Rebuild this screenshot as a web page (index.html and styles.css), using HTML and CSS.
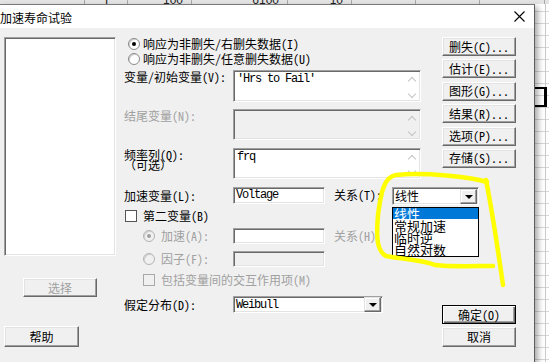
FILE: index.html
```html
<!DOCTYPE html>
<html lang="zh-CN">
<head>
    <meta charset="UTF-8">
    <title>加速寿命试验</title>
    <link rel="stylesheet" href="styles.css">
</head>
<body>
    <div class="sheet-head">
        <span></span>
        <span>F</span>
        <span>100</span>
        <span>6100</span>
        <span>10</span>
        <span></span>
        <span></span>
        <span></span>
    </div>

    <div class="desk">
        <div class="dialog">
            <div class="titlebar">
                <span class="title">加速寿命试验</span>
                <svg class="close" width="11" height="11" viewBox="0 0 11 11"><path d="M0.5 0.5L10.5 10.5M10.5 0.5L0.5 10.5" stroke="#000" stroke-width="1.1" fill="none"/></svg>
            </div>

            <div class="dlg-body">
                <div class="left-col">
                    <div class="listbox sunken"></div>
                    <div class="btn select disabled">选择</div>
                    <div class="btn help">帮助</div>
                </div>

                <div class="main">
                    <div class="top">
                        <div class="top-form">
                            <div class="opt"><span class="radio on"></span>响应为非删失/右删失数据(I)</div>
                            <div class="opt"><span class="radio"></span>响应为非删失/任意删失数据(U)</div>

                            <div class="field-row r-var">
                                <div class="label">变量/初始变量(V):</div>
                                <div class="memo sunken">
                                    <div class="memo-text">'Hrs to Fail'</div>
                                    <div class="scroll"><i class="up"></i><i class="down"></i></div>
                                </div>
                            </div>
                            <div class="field-row r-end">
                                <div class="label disabled">结尾变量(N):</div>
                                <div class="memo sunken off">
                                    <div class="memo-text"></div>
                                    <div class="scroll"><i class="up"></i><i class="down"></i></div>
                                </div>
                            </div>
                            <div class="field-row r-frq">
                                <div class="label two">频率列(Q):<br>（可选）</div>
                                <div class="memo sunken">
                                    <div class="memo-text">frq</div>
                                    <div class="scroll"><i class="up"></i><i class="down"></i></div>
                                </div>
                            </div>
                        </div>

                        <div class="side-btns">
                            <div class="btn">删失(C)...</div>
                            <div class="btn">估计(E)...</div>
                            <div class="btn">图形(G)...</div>
                            <div class="btn">结果(R)...</div>
                            <div class="btn">选项(P)...</div>
                            <div class="btn">存储(S)...</div>
                        </div>
                    </div>

                    <div class="field-row r-volt">
                        <div class="label">加速变量(L):</div>
                        <div class="edit sunken">Voltage</div>
                        <div class="rel">关系(T):</div>
                        <div class="combo sunken small">
                            <span class="combo-text">线性</span>
                            <span class="drop"></span>
                        </div>
                    </div>

                    <div class="check-row r-second">
                        <span class="check"></span>第二变量(B)
                    </div>

                    <div class="field-row sub r-acc">
                        <div class="label sub-label disabled"><span class="radio on off"></span>加速(A):</div>
                        <div class="edit sunken"></div>
                        <div class="rel disabled">关系(H)</div>
                    </div>

                    <div class="field-row sub r-fac">
                        <div class="label sub-label disabled"><span class="radio off"></span>因子(F):</div>
                        <div class="edit sunken off"></div>
                    </div>

                    <div class="check-row sub-check disabled">
                        <span class="check off"></span>包括变量间的交互作用项(M)
                    </div>

                    <div class="bottom">
                        <div class="field-row r-dist">
                            <div class="label">假定分布(D):</div>
                            <div class="combo sunken wide">
                                <span class="combo-text mono">Weibull</span>
                                <span class="drop"></span>
                            </div>
                        </div>
                        <div class="ok-btns">
                            <div class="btn default">确定(O)</div>
                            <div class="btn cancel">取消</div>
                        </div>
                    </div>
                </div>

                <ul class="popup">
                    <li class="hot">线性</li>
                    <li>常规加速</li>
                    <li>临时逆</li>
                    <li>自然对数</li>
                </ul>
            </div>
        </div>

        <div class="sheet-side">
            <div class="cell-mark"></div>
        </div>
    </div>

    <svg class="marker" width="549" height="362" viewBox="0 0 549 362">
        <path d="M487 182 C470 177, 425 172, 396 175 C384 177, 381 192, 378 215 C376 238, 377 251, 386 256 C400 259, 420 259, 435 265 C450 267, 475 266, 493 266" />
        <path d="M486 180 C492 210, 498 250, 503 285" />
    </svg>
</body>
</html>
```

FILE: styles.css
```css
*{
    box-sizing: border-box;
}
html,body{
    margin: 0;
    padding: 0;
}
body{
    width: 549px;
    height: 362px;
    overflow: hidden;
    position: relative;
    font-family: "Noto Sans Mono CJK SC", "Noto Sans CJK SC", sans-serif;
    font-size: 12px;
    color: #000;
    background-color: #fff;
    background-image:
        linear-gradient(to right, transparent 545px, #c8c8c8 545px, #c8c8c8 546px, transparent 546px),
        repeating-linear-gradient(to bottom, transparent 0, transparent 11px, #d6d6d6 11px, #d6d6d6 12px);
}

/* spreadsheet strip behind the dialog */
.sheet-head{
    height: 4px;
    display: flex;
    background: #e4e4e4;
    overflow: hidden;
    font-family: "Liberation Sans", sans-serif;
    font-size: 12px;
    line-height: 0;
}
.sheet-head span{
    height: 4px;
    border-right: 1px solid #a8a8a8;
    text-align: right;
    padding-right: 8px;
    color: #222;
}
.sheet-head span:nth-child(1){ width: 85px; }
.sheet-head span:nth-child(2){ width: 43px; text-align: left; padding-left: 20px; }
.sheet-head span:nth-child(3){ width: 64px; }
.sheet-head span:nth-child(4){ width: 96px; }
.sheet-head span:nth-child(5){ width: 64px; }
.sheet-head span:nth-child(6){ width: 64px; }
.sheet-head span:nth-child(7){ width: 64px; }
.sheet-head span:nth-child(8){ width: 65px; }

.desk{
    display: flex;
    height: 358px;
}
.sheet-side{
    flex: 1;
}
.cell-mark{
    margin-top: 83px;
    width: 12px;
    height: 20px;
    border-top: 2px solid #000;
    border-right: 3px solid #000;
    border-bottom: 2px solid #000;
}

/* dialog window */
.dialog{
    width: 535px;
    height: 358px;
    display: flex;
    flex-direction: column;
    background: #f0f0f0;
    border-top: 1px solid #7a7a7a;
    border-right: 1px solid #5e5e5e;
    box-shadow: 3px 3px 6px rgba(0,0,0,0.35);
    position: relative;
    z-index: 1;
}
.titlebar{
    height: 23px;
    background: #fff;
    display: flex;
    align-items: center;
    justify-content: space-between;
    padding-right: 9px;
    font-family: "Noto Sans CJK SC", sans-serif;
    font-size: 12px;
}
.title{
    padding-top: 1px;
}
.close{
    display: block;
}

.dlg-body{
    flex: 1;
    display: flex;
    position: relative;
}

/* 3d borders */
.sunken{
    background: #fff;
    border-top: 1px solid #a0a0a0;
    border-left: 1px solid #a0a0a0;
    border-right: 1px solid #fff;
    border-bottom: 1px solid #fff;
    box-shadow: inset 1px 1px 0 #696969, inset -1px -1px 0 #e3e3e3;
}
.sunken.off{
    background: #f0f0f0;
}
.btn{
    width: 74px;
    height: 19px;
    background: #f0f0f0;
    border-top: 1px solid #fff;
    border-left: 1px solid #fff;
    border-right: 1px solid #696969;
    border-bottom: 1px solid #696969;
    box-shadow: inset -1px -1px 0 #a0a0a0, inset 1px 1px 0 #e3e3e3;
    display: flex;
    align-items: center;
    justify-content: center;
    line-height: 12px;
}
.btn.default{
    border: 1px solid #000;
    box-shadow: inset 1px 1px 0 #fff, inset -1px -1px 0 #696969, inset -2px -2px 0 #a0a0a0;
}
.disabled{
    color: #a0a0a0;
}

/* left column */
.left-col{
    width: 124px;
    padding-left: 4px;
    display: flex;
    flex-direction: column;
    align-items: flex-start;
}
.listbox{
    width: 112px;
    height: 219px;
    margin-top: 9px;
}
.btn.select{
    margin: 22px 0 0 19px;
}
.btn.help{
    margin-top: 29px;
    width: 75px;
    height: 21px;
}

/* main form */
.main{
    width: 392px;
    display: flex;
    flex-direction: column;
}
.top{
    display: flex;
    height: 151px;
}
.top-form{
    width: 297px;
    padding-top: 8px;
    display: flex;
    flex-direction: column;
}
.side-btns{
    margin-left: 21px;
    width: 74px;
    padding-top: 9px;
    display: flex;
    flex-direction: column;
    gap: 3.4px;
}

.opt{
    height: 15px;
    display: flex;
    align-items: center;
    gap: 3px;
    padding-left: 4px;
    line-height: 12px;
}
.radio{
    width: 12px;
    height: 12px;
    border-radius: 50%;
    background: #fff;
    border: 1px solid #8a8a8a;
    box-shadow: inset 1px 1px 0 #d0d0d0;
    display: inline-flex;
    align-items: center;
    justify-content: center;
    flex: none;
}
.radio.on::after{
    content: "";
    width: 4px;
    height: 4px;
    border-radius: 50%;
    background: #000;
}
.radio.off{
    background: #f0f0f0;
    border-color: #b4b4b4;
}
.radio.on.off::after{
    background: #a0a0a0;
}
.check{
    width: 12px;
    height: 12px;
    background: #fff;
    border: 1px solid #555;
    flex: none;
}
.check.off{
    background: #f0f0f0;
    border-color: #a8a8a8;
}

.field-row{
    display: flex;
}
.label{
    width: 109px;
    line-height: 14px;
    flex: none;
}
.label.two{
    line-height: 10px;
    padding-top: 2px;
}
.memo{
    width: 188px;
    display: flex;
}
.memo-text{
    flex: 1;
    padding: 1px 0 0 3px;
    font-family: "Liberation Mono", monospace;
    font-size: 12px;
    letter-spacing: -1.2px;
    line-height: 14px;
}
.scroll{
    width: 17px;
    display: flex;
    flex-direction: column;
    justify-content: space-between;
    align-items: center;
    padding: 7px 0 4px;
}
.scroll i{
    width: 6px;
    height: 6px;
    border-left: 1px solid #c4c4c4;
    border-top: 1px solid #c4c4c4;
    display: block;
}
.scroll .up{
    transform: rotate(45deg);
}
.scroll .down{
    transform: rotate(225deg);
}
.r-var{
    margin-top: 4px;
    height: 32px;
}
.r-end{
    margin-top: 7px;
    height: 31px;
}
.r-frq{
    margin-top: 8px;
    height: 31px;
}

.edit{
    width: 92px;
    padding: 0 0 0 2px;
    font-family: "Liberation Mono", monospace;
    font-size: 12px;
    letter-spacing: -1.2px;
    line-height: 15px;
}
.rel{
    margin-left: 9px;
    width: 58px;
    line-height: 16px;
}
.r-volt{
    margin-top: 8px;
    height: 17px;
}
.r-volt .label{
    line-height: 17px;
}

.combo{
    display: flex;
    align-items: center;
    justify-content: space-between;
    padding: 0 1px 0 2px;
}
.combo.small{
    width: 87px;
    height: 18px;
}
.combo.wide{
    width: 150px;
    height: 17px;
}
.combo-text{
    line-height: 14px;
}
.combo-text.mono{
    font-family: "Liberation Mono", monospace;
    letter-spacing: -1.2px;
}
.drop{
    width: 17px;
    height: 15px;
    background: #f0f0f0;
    border-top: 1px solid #e3e3e3;
    border-left: 1px solid #e3e3e3;
    border-right: 1px solid #696969;
    border-bottom: 1px solid #696969;
    box-shadow: inset -1px -1px 0 #a0a0a0, inset 1px 1px 0 #fff;
    display: flex;
    align-items: center;
    justify-content: center;
}
.drop::after{
    content: "";
    border-left: 4px solid transparent;
    border-right: 4px solid transparent;
    border-top: 4px solid #000;
    margin-top: 1px;
}

.check-row{
    display: flex;
    align-items: center;
    gap: 6px;
    height: 14px;
    line-height: 12px;
}
.r-second{
    margin-top: 5px;
    padding-left: 1px;
}
.sub-label{
    display: flex;
    align-items: center;
    gap: 6px;
    padding-left: 19px;
}
.r-acc{
    margin-top: 5px;
    height: 16px;
}
.r-fac{
    margin-top: 7px;
    height: 16px;
}
.sub-check{
    margin-top: 6px;
    padding-left: 19px;
}

.bottom{
    display: flex;
    justify-content: space-between;
}
.r-dist{
    margin-top: 9px;
    height: 17px;
}
.r-dist .label{
    line-height: 17px;
}
.ok-btns{
    margin-top: 18px;
    display: flex;
    flex-direction: column;
    gap: 3px;
}
.btn.cancel{
    height: 20px;
}

/* opened drop-down list */
.popup{
    position: absolute;
    left: 392px;
    top: 179px;
    width: 87px;
    height: 50px;
    margin: 0;
    padding: 0;
    list-style: none;
    background: #fff;
    border: 1px solid #000;
    font-family: "Noto Sans CJK SC", sans-serif;
    font-size: 13px;
}
.popup li{
    height: 12px;
    line-height: 12px;
    padding-left: 1px;
}
.popup li.hot{
    height: 11px;
    margin-bottom: 1px;
    background: #0078d7;
    color: #fff;
}

/* yellow hand-drawn marking */
.marker{
    position: absolute;
    left: 0;
    top: 0;
    z-index: 5;
    pointer-events: none;
}
.marker path{
    fill: none;
    stroke: #ffff00;
    stroke-width: 4.5;
    stroke-linecap: round;
    stroke-linejoin: round;
}
```
